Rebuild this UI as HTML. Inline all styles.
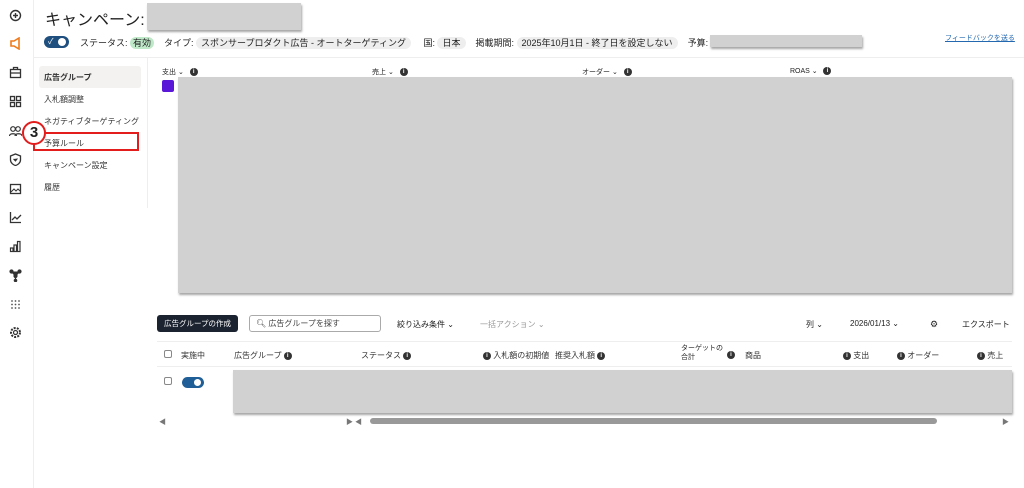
<!DOCTYPE html><html><head><meta charset="utf-8"><style>
*{margin:0;padding:0;box-sizing:border-box}
body{width:1024px;height:488px;background:#fff;font-family:"Liberation Sans","Noto Sans CJK JP",sans-serif;color:#222;position:relative;overflow:hidden;font-size:9px}
.a{position:absolute}
.rail{left:0;top:0;width:34px;height:488px;border-right:1px solid #eee;background:#fff}
.ic{position:absolute;left:9px;width:13px;height:13px;color:#333}
.pill{background:#eee;border-radius:7px;padding:1px 5px}
.g{background:#d1d1d1;box-shadow:1px 2px 2px rgba(0,0,0,.35)}
.i{display:inline-block;width:8px;height:8px;border-radius:50%;background:#333;color:#fff;font-size:6px;text-align:center;line-height:8px;font-weight:bold;vertical-align:middle}
.nav{left:38px;font-size:8px;color:#333}
.th{top:350px;font-size:8px;color:#333}
</style></head><body>
<div class="a rail"></div>
<svg class="ic" style="top:9px" viewBox="0 0 13 13"><circle cx="6.5" cy="6.5" r="5" fill="none" stroke="#333" stroke-width="1.4"/><path d="M6.5 4v5M4 6.5h5" stroke="#333" stroke-width="1.4"/></svg>
<svg class="ic" style="top:37px" viewBox="0 0 13 13"><path d="M2 4h3l5-3v11L5 9H2z" fill="none" stroke="#f07a1a" stroke-width="1.6"/></svg>
<svg class="ic" style="top:66px" viewBox="0 0 13 13"><rect x="1.5" y="3.5" width="10" height="8" fill="none" stroke="#333" stroke-width="1.3"/><path d="M4.5 3.5V1.5h4v2M1.5 7h10" stroke="#333" stroke-width="1.3" fill="none"/></svg>
<svg class="ic" style="top:95px" viewBox="0 0 13 13"><g fill="none" stroke="#333" stroke-width="1.3"><rect x="1.5" y="1.5" width="4" height="4"/><rect x="7.5" y="1.5" width="4" height="4"/><rect x="1.5" y="7.5" width="4" height="4"/><rect x="7.5" y="7.5" width="4" height="4"/></g></svg>
<svg class="ic" style="top:124px" viewBox="0 0 13 13"><g fill="none" stroke="#333" stroke-width="1.2"><circle cx="4" cy="5" r="2.3"/><circle cx="9" cy="5" r="2.3"/><path d="M0.5 12c0-3 7-3 7 0M6 12c0-3 7-3 7 0"/></g></svg>
<svg class="ic" style="top:153px" viewBox="0 0 13 13"><path d="M6.5 1L11.5 3v4c0 3-3 5-5 5.5C4.5 12 1.5 10 1.5 7V3z" fill="none" stroke="#333" stroke-width="1.3"/><path d="M4.5 6l2 2 2-2.5" fill="#333" stroke="#333"/></svg>
<svg class="ic" style="top:182px" viewBox="0 0 13 13"><rect x="1.5" y="2.5" width="10" height="9" fill="none" stroke="#333" stroke-width="1.3"/><path d="M2 10l3-3 2 2 2-2 2 2" stroke="#333" fill="none"/></svg>
<svg class="ic" style="top:211px" viewBox="0 0 13 13"><path d="M1.5 1v10.5H12M3 9l3-3 2 2 4-4" stroke="#333" stroke-width="1.3" fill="none"/></svg>
<svg class="ic" style="top:240px" viewBox="0 0 13 13"><g fill="none" stroke="#333" stroke-width="1.2"><rect x="1.5" y="8" width="2.5" height="3.5"/><rect x="5" y="5" width="2.5" height="6.5"/><rect x="8.5" y="1.5" width="2.5" height="10"/></g></svg>
<svg class="ic" style="top:269px" viewBox="0 0 13 13"><g stroke="#333" stroke-width="1.2" fill="#333"><circle cx="2.5" cy="2.5" r="1.5"/><circle cx="10.5" cy="2.5" r="1.5"/><circle cx="6.5" cy="7" r="1.5"/><circle cx="6.5" cy="11.5" r="1.2"/><path d="M2.5 2.5l4 4.5 4-4.5M6.5 7v4.5"/></g></svg>
<svg class="ic" style="top:298px" viewBox="0 0 13 13"><g fill="#555"><circle cx="3" cy="3" r=".9"/><circle cx="6.5" cy="3" r=".9"/><circle cx="10" cy="3" r=".9"/><circle cx="3" cy="6.5" r=".9"/><circle cx="6.5" cy="6.5" r=".9"/><circle cx="10" cy="6.5" r=".9"/><circle cx="3" cy="10" r=".9"/><circle cx="6.5" cy="10" r=".9"/><circle cx="10" cy="10" r=".9"/></g></svg>
<svg class="ic" style="top:326px" viewBox="0 0 13 13"><circle cx="6.5" cy="6.5" r="4.5" fill="none" stroke="#333" stroke-width="2" stroke-dasharray="2 1.2"/><circle cx="6.5" cy="6.5" r="2" fill="none" stroke="#333" stroke-width="1.2"/></svg>

<div class="a" style="left:45px;top:6px;font-size:16px;color:#222;letter-spacing:0">キャンペーン:</div>
<div class="a g" style="left:147px;top:3px;width:154px;height:27px"></div>
<div class="a" style="left:44px;top:36px;width:25px;height:12px;border-radius:6px;background:#1f4f7e"><div class="a" style="left:14px;top:2px;width:8px;height:8px;border-radius:50%;background:#fff"></div><span class="a" style="left:4px;top:0;color:#fff;font-size:8px">✓</span></div>
<div class="a" style="left:80px;top:36px;font-size:9px;white-space:nowrap">ステータス: <span style="background:#bfe8c8;border-radius:6px;padding:1px 3px">有効</span>&nbsp;&nbsp;&nbsp; タイプ: <span class="pill">スポンサープロダクト広告 - オートターゲティング</span>&nbsp;&nbsp;&nbsp;&nbsp; 国: <span class="pill">日本</span>&nbsp;&nbsp;&nbsp; 掲載期間: <span class="pill">2025年10月1日 - 終了日を設定しない</span>&nbsp;&nbsp;&nbsp; 予算:</div>
<div class="a g" style="left:710px;top:35px;width:152px;height:12px"></div>
<div class="a" style="left:945px;top:33px;font-size:7px;color:#2468b0;text-decoration:underline">フィードバックを送る</div>
<div class="a" style="left:34px;top:57px;width:990px;border-top:1px solid #eee"></div>
<div class="a" style="left:147px;top:58px;height:150px;border-left:1px solid #eee"></div>
<div class="a" style="left:39px;top:66px;width:102px;height:22px;background:#f3f2f0;border-radius:3px"></div>
<div class="a nav" style="top:72px;font-weight:bold;left:44px">広告グループ</div>
<div class="a nav" style="top:94px;left:44px">入札額調整</div>
<div class="a nav" style="top:116px;left:44px">ネガティブターゲティング</div>
<div class="a nav" style="top:138px;left:44px">予算ルール</div>
<div class="a" style="left:33px;top:132px;width:106px;height:19px;border:2px solid #e31c1c"></div>
<div class="a" style="left:22px;top:121px;width:24px;height:24px;border-radius:50%;background:#fff;border:2px solid #e31c1c;font-size:15px;font-weight:bold;text-align:center;line-height:20px">3</div>
<div class="a nav" style="top:160px;left:44px">キャンペーン設定</div>
<div class="a nav" style="top:182px;left:44px">履歴</div>

<div class="a" style="left:162px;top:67px;font-size:7px">支出 ⌄ &nbsp;&nbsp;<span class="i">i</span></div>
<div class="a" style="left:372px;top:67px;font-size:7px">売上 ⌄ &nbsp;&nbsp;<span class="i">i</span></div>
<div class="a" style="left:582px;top:67px;font-size:7px">オーダー ⌄ &nbsp;&nbsp;<span class="i">i</span></div>
<div class="a" style="left:790px;top:67px;font-size:7px">ROAS ⌄ &nbsp;&nbsp;<span class="i">i</span></div>
<div class="a" style="left:162px;top:80px;width:12px;height:12px;border-radius:2px;background:#5b17d8"></div>
<div class="a g" style="left:178px;top:77px;width:834px;height:216px"></div>

<div class="a" style="left:157px;top:315px;width:81px;height:17px;background:#1b2330;border-radius:3px;color:#fff;font-size:7.5px;text-align:center;line-height:17px">広告グループの作成</div>
<div class="a" style="left:249px;top:315px;width:132px;height:17px;border:1px solid #aaa;border-radius:3px;font-size:8px;line-height:15px;padding-left:6px;color:#444">🔍︎ 広告グループを探す</div>
<div class="a" style="left:397px;top:319px;font-size:8px">絞り込み条件 ⌄</div>
<div class="a" style="left:480px;top:319px;font-size:8px;color:#999">一括アクション ⌄</div>
<div class="a" style="left:806px;top:319px;font-size:8px">列 ⌄</div>
<div class="a" style="left:850px;top:319px;font-size:8px">2026/01/13 ⌄</div>
<div class="a" style="left:930px;top:319px;font-size:9px">⚙</div>
<div class="a" style="left:962px;top:319px;font-size:8px">エクスポート</div>
<div class="a" style="left:157px;top:341px;width:855px;border-top:1px solid #eee"></div>
<div class="a" style="left:164px;top:350px;width:8px;height:8px;border:1px solid #888;border-radius:2px"></div>
<div class="a th" style="left:181px">実施中</div>
<div class="a th" style="left:234px">広告グループ <span class="i">i</span></div>
<div class="a th" style="left:361px">ステータス <span class="i">i</span></div>
<div class="a th" style="left:483px"><span class="i">i</span> 入札額の初期値</div>
<div class="a th" style="left:555px">推奨入札額 <span class="i">i</span></div>
<div class="a" style="left:681px;top:344px;font-size:7px;line-height:9px">ターゲットの<br>合計</div>
<div class="a th" style="left:727px"><span class="i">i</span></div>
<div class="a th" style="left:745px">商品</div>
<div class="a th" style="left:843px"><span class="i">i</span> 支出</div>
<div class="a th" style="left:897px"><span class="i">i</span> オーダー</div>
<div class="a th" style="left:977px"><span class="i">i</span> 売上</div>
<div class="a" style="left:157px;top:366px;width:855px;border-top:1px solid #eee"></div>
<div class="a" style="left:164px;top:377px;width:8px;height:8px;border:1px solid #888;border-radius:2px"></div>
<div class="a" style="left:182px;top:377px;width:22px;height:11px;border-radius:6px;background:#1f5e96"><div class="a" style="left:12px;top:2px;width:7px;height:7px;border-radius:50%;background:#fff"></div></div>
<div class="a g" style="left:233px;top:370px;width:779px;height:43px"></div>
<div class="a" style="left:159px;top:417px;font-size:7px;color:#777">◀</div>
<div class="a" style="left:346px;top:417px;font-size:7px;color:#777">▶ ◀</div>
<div class="a" style="left:370px;top:418px;width:567px;height:6px;border-radius:3px;background:#999"></div>
<div class="a" style="left:1002px;top:417px;font-size:7px;color:#777">▶</div>
</body></html>
